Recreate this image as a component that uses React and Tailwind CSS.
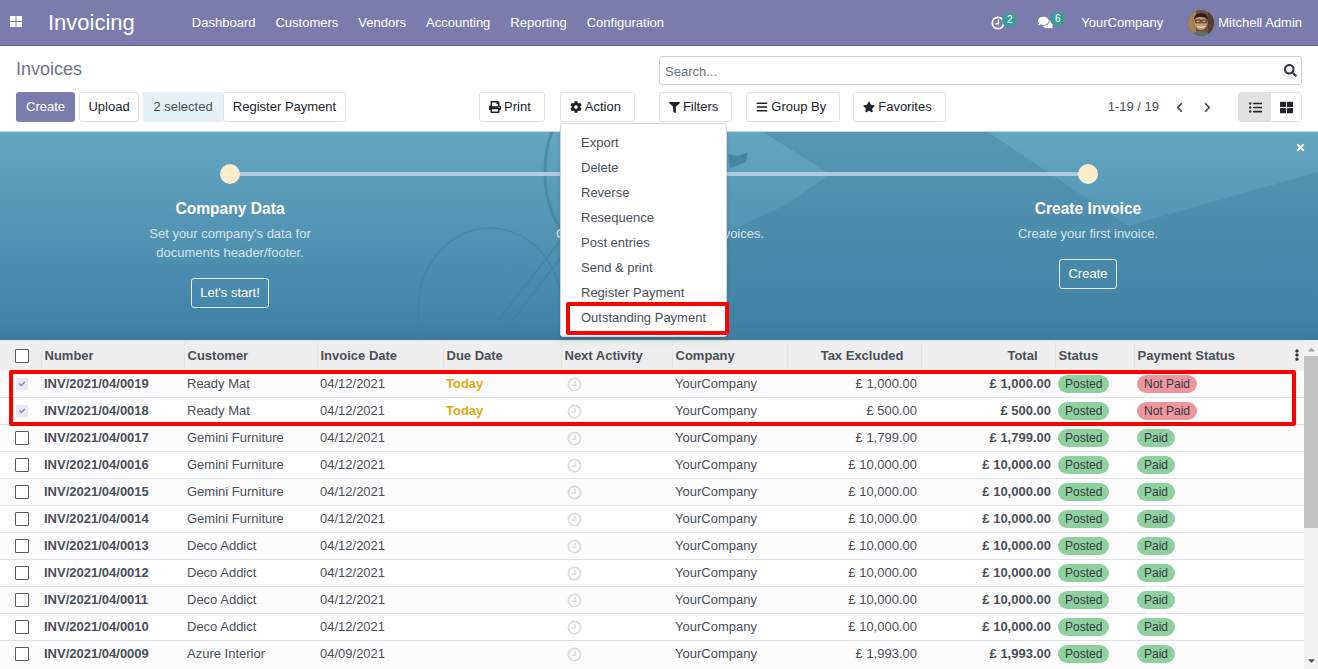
import React from 'react';
import { FaComments, FaPrint, FaCog, FaFilter, FaBars, FaStar, FaListUl, FaThLarge, FaEllipsisV, FaCheck, FaCaretUp, FaCaretDown, FaSearch, FaTimes, FaChevronLeft, FaChevronRight } from 'react-icons/fa';

const navItems = ['Dashboard', 'Customers', 'Vendors', 'Accounting', 'Reporting', 'Configuration'];
const menuItems = ['Export', 'Delete', 'Reverse', 'Resequence', 'Post entries', 'Send & print', 'Register Payment', 'Outstanding Payment'];

const rows = [
  { num: '0019', customer: 'Ready Mat', date: '04/12/2021', due: 'Today', amount: '1,000.00', paid: false, checked: true },
  { num: '0018', customer: 'Ready Mat', date: '04/12/2021', due: 'Today', amount: '500.00', paid: false, checked: true },
  { num: '0017', customer: 'Gemini Furniture', date: '04/12/2021', amount: '1,799.00', paid: true },
  { num: '0016', customer: 'Gemini Furniture', date: '04/12/2021', amount: '10,000.00', paid: true },
  { num: '0015', customer: 'Gemini Furniture', date: '04/12/2021', amount: '10,000.00', paid: true },
  { num: '0014', customer: 'Gemini Furniture', date: '04/12/2021', amount: '10,000.00', paid: true },
  { num: '0013', customer: 'Deco Addict', date: '04/12/2021', amount: '10,000.00', paid: true },
  { num: '0012', customer: 'Deco Addict', date: '04/12/2021', amount: '10,000.00', paid: true },
  { num: '0011', customer: 'Deco Addict', date: '04/12/2021', amount: '10,000.00', paid: true },
  { num: '0010', customer: 'Deco Addict', date: '04/12/2021', amount: '10,000.00', paid: true },
  { num: '0009', customer: 'Azure Interior', date: '04/09/2021', amount: '1,993.00', paid: true },
];

const Btn = ({ children, className = '' }) => (
  <button className={`h-[30px] pl-[9px] pr-[13px] flex items-center gap-[3px] bg-white border border-[#dee2e6] rounded-[3px] text-[13px] text-[#212529] whitespace-nowrap ${className}`}>
    {children}
  </button>
);

const Badge = ({ count, className = '' }) => (
  <span className={`absolute -top-[3px] h-[14px] w-[15px] rounded-full bg-[#3a9d97] text-white text-[10px] leading-[14px] text-center ${className}`}>{count}</span>
);

// open ring with an L shaped hand, same drawing in the navbar and in the rows
const ClockIcon = ({ className = '' }) => (
  <svg viewBox="0 0 16 16" className={className} fill="none" stroke="currentColor">
    <circle cx="8" cy="8" r="6.500" strokeWidth="2" />
    <path d="M8.500 4 V8.800 H5" strokeWidth="1.600" />
  </svg>
);

const Avatar = () => (
  <svg viewBox="0 0 26 26" className="w-[26px] h-[26px] rounded-full">
    <rect width="26" height="26" fill="#6e5239" />
    <rect x="0" y="0" width="8" height="26" fill="#a08455" />
    <rect x="20" y="0" width="6" height="26" fill="#54402f" />
    <ellipse cx="13" cy="12.500" rx="6.500" ry="7.500" fill="#c9987a" />
    <path d="M6 10 Q6 3 13 3 Q20 3 20 10 Q17 6.500 13 7 Q8 6.500 6 10Z" fill="#2b211c" />
    <rect x="7.800" y="10" width="4.400" height="2.800" fill="none" stroke="#221f1e" strokeWidth="0.800" />
    <rect x="13.800" y="10" width="4.400" height="2.800" fill="none" stroke="#221f1e" strokeWidth="0.800" />
    <path d="M9.500 16.500 Q13 18.500 16.500 16.500" fill="none" stroke="#f3ece4" strokeWidth="1" />
    <path d="M3 26 Q5 21 13 21 Q21 21 23 26Z" fill="#5f6f69" />
  </svg>
);

const Navbar = () => (
  <header className="h-[46px] shrink-0 bg-[#7c7bad] border-b border-[#5f5e97] flex items-center text-white">
    <svg viewBox="0 0 12 11" className="w-[12px] h-[11px] ml-[10px] -mt-[2px]" fill="#fff">
      <rect width="5.500" height="5" /><rect x="6.500" width="5.500" height="5" />
      <rect y="6" width="5.500" height="5" /><rect x="6.500" y="6" width="5.500" height="5" />
    </svg>
    <span className="ml-[26px] text-[22px] leading-none">Invoicing</span>
    <nav className="ml-[57px] flex gap-[20px] text-[13px]">
      {navItems.map(item => <span key={item}>{item}</span>)}
    </nav>
    <div className="ml-auto flex items-center text-[13px]">
      <span className="relative mr-[33px]"><ClockIcon className="w-[14px] h-[14px] text-white" /><Badge count="2" className="left-[11px]" /></span>
      <span className="relative mr-[28px]"><FaComments className="w-[15px] h-[15px]" /><Badge count="6" className="left-[12px]" /></span>
      <span>YourCompany</span>
      <span className="ml-[25px] mr-[4px]"><Avatar /></span>
      <span className="mr-[16px]">Mitchell Admin</span>
    </div>
  </header>
);

const ControlPanel = () => (
  <div className="h-[86px] shrink-0 bg-white border-b border-[#ced4da] pl-[16px] pr-[16px]">
    <div className="flex pt-[10px] h-[45px]">
      <h1 className="text-[18px] text-[#6c757d] leading-[26px]">Invoices</h1>
      <div className="ml-auto w-[643px] h-[29px] border border-[#ced4da] rounded-[3px] flex items-center justify-between pl-[5px] pr-[4px] pt-[2px] text-[13px] text-[#6c757d]">
        <span>Search...</span>
        <FaSearch className="w-[13px] h-[13px] text-[#343a40] -mt-[2px]" />
      </div>
    </div>
    <div className="flex items-center mt-[1px]">
      <button className="h-[30px] px-[10px] bg-[#7c7bad] text-white text-[13px] rounded-[3px]">Create</button>
      <Btn className="ml-[4px] !px-0 w-[60px] justify-center">Upload</Btn>
      <span className="ml-[4px] h-[30px] w-[80px] flex items-center justify-center bg-[#e6f1f5] text-[13px] text-[#495057]">2 selected</span>
      <Btn className="!px-0 w-[123px] justify-center">Register Payment</Btn>
      <Btn className="ml-[133px]"><FaPrint className="w-[12px] h-[12px]" /> Print</Btn>
      <Btn className="ml-[15px]"><FaCog className="w-[12px] h-[12px]" /> Action</Btn>
      <Btn className="ml-[24px]"><FaFilter className="w-[11px] h-[11px]" /> Filters</Btn>
      <Btn className="ml-[14px]"><FaBars className="w-[12px] h-[12px]" /> Group By</Btn>
      <Btn className="ml-[13px]"><FaStar className="w-[12px] h-[12px]" /> Favorites</Btn>
      <span className="ml-auto text-[13px] text-[#495057]">1-19 / 19</span>
      <FaChevronLeft className="ml-[15px] w-[11px] h-[11px] text-[#495057]" />
      <FaChevronRight className="ml-[17px] w-[11px] h-[11px] text-[#495057]" />
      <div className="ml-[25px] flex h-[30px] border border-[#dee2e6] rounded-[3px] overflow-hidden">
        <span className="w-[32px] bg-[#e2e2e2] flex items-center justify-center"><FaListUl className="w-[13px] h-[13px] text-[#212529]" /></span>
        <span className="w-[30px] bg-white flex items-center justify-center"><FaThLarge className="w-[13px] h-[13px] text-[#212529]" /></span>
      </div>
    </div>
  </div>
);

const BannerArt = () => (
  <svg viewBox="0 0 1318 208" preserveAspectRatio="none" className="absolute inset-0 w-full h-full">
    <defs>
      <linearGradient id="bannerBg" x1="0" y1="0" x2="0" y2="1">
        <stop offset="0" stopColor="#64a5c0" />
        <stop offset="0.9" stopColor="#4484aa" />
        <stop offset="1" stopColor="#3f7a9d" />
      </linearGradient>
    </defs>
    <rect width="1318" height="208" fill="url(#bannerBg)" />
    <path d="M763 0 L988 0 L1128 94 L1318 40 L1318 208 L640 208 L727 100 L786 73 L830 42Z" fill="#3f7f9f" opacity="0.35" />
    <ellipse cx="490" cy="178" rx="72" ry="82" fill="none" stroke="#3f7f9f" strokeWidth="1.500" opacity="0.55" />
    <ellipse cx="590" cy="40" rx="45" ry="75" fill="none" stroke="#3f7f9f" strokeWidth="3" opacity="0.6" />
    <path d="M561 108 L498 188 M561 125 L510 192" stroke="#3f7f9f" strokeWidth="1.500" opacity="0.55" />
    <path d="M728 22 L738 24 L748 20 L746 30 L736 34 L730 36Z" fill="#3f7f9f" opacity="0.8" />
  </svg>
);

const Step = ({ title, lines, action, className = '' }) => (
  <div className={`absolute top-[32px] flex flex-col items-center text-center ${className}`}>
    <span className="w-[20px] h-[20px] rounded-full bg-[#fbeccb]" />
    <h2 className="mt-[15px] text-[15.6px] leading-[20px] font-bold text-white">{title}</h2>
    <p className="mt-[5px] text-[13px] leading-[19px] text-[#d5e5ec]">{lines.map(l => <span key={l} className="block whitespace-nowrap">{l}</span>)}</p>
    <button className="mt-[16px] h-[30px] px-[8px] border border-[#e4eff4] rounded-[3px] text-[13px] text-white">{action}</button>
  </div>
);

const Banner = () => (
  <section className="h-[208px] shrink-0 relative overflow-hidden">
    <BannerArt />
    <div className="absolute left-[230px] right-[230px] top-[40px] h-[4px] bg-[#abcddb]" />
    <Step className="left-[130px] w-[200px]" title="Company Data" lines={["Set your company's data for", 'documents header/footer.']} action="Let's start!" />
    <Step className="left-[988px] w-[200px]" title="Create Invoice" lines={['Create your first invoice.']} action="Create" />
    <p className="absolute top-[92px] left-[556px] text-[13px] leading-[19px] text-[#d5e5ec] whitespace-nowrap">Customize the look of your invoices.</p>
    <FaTimes className="absolute top-[10px] right-[12px] w-[11px] h-[11px] text-white" />
  </section>
);

const Box = () => <span className="block w-[14px] h-[14px] ml-[15px] border border-[#555b61] bg-white rounded-[1px]" />;

const CheckedBox = () => (
  <span className="ml-[16px] w-[12px] h-[12px] rounded-[2px] bg-[#e7e7f1] flex items-center justify-center">
    <FaCheck className="w-[6px] h-[6px] text-[#7c7bad]" />
  </span>
);

const Pill = ({ color, children }) => (
  <span className={`inline-block h-[18px] leading-[18px] px-[7px] rounded-full text-[12px] text-[#343a40] ${color}`}>{children}</span>
);

const headers = [
  ['Number', 'text-left', 'w-[143px]'],
  ['Customer', 'text-left', 'w-[133px]'],
  ['Invoice Date', 'text-left', 'w-[126px]'],
  ['Due Date', 'text-left', 'w-[118px]'],
  ['Next Activity', 'text-left', 'w-[111px]'],
  ['Company', 'text-left', 'w-[115px]'],
  ['Tax Excluded', 'text-right', 'w-[134px]'],
  ['Total', 'text-right', 'w-[134px]'],
  ['Status', 'text-left', 'w-[79px]'],
  ['Payment Status', 'text-left', 'w-[170px]'],
];

const InvoiceTable = () => (
  <table className="w-[1304px] table-fixed border-collapse text-[13px] text-[#495057]">
    <thead>
      <tr className="h-[29px] bg-[#eeeeee] border-t-[2px] border-b-[2px] border-t-[#e4e7eb] border-b-[#f1f2f4]">
        <th className="w-[41px] border-r border-[#e4e4e4]"><Box /></th>
        {headers.map(([label, align, width]) => (
          <th key={label} className={`${width} ${align} font-bold pl-[3px] pr-[4px] border-r border-[#e4e4e4] last:border-r-0 relative`}>
            {label === 'Tax Excluded' || label === 'Total' ? <span className="pr-[13px]">{label}</span> : label}
            {label === 'Payment Status' && <FaEllipsisV className="absolute right-[1px] top-[7px] w-[12px] h-[12px] text-[#343a40]" />}
          </th>
        ))}
      </tr>
    </thead>
    <tbody>
      {rows.map((row, i) => (
        <tr key={row.num} className={`h-[27px] border-t border-[#dee2e6] ${i % 2 === 0 ? 'bg-[#fcfcfc]' : 'bg-white'}`}>
          <td>{row.checked ? <CheckedBox /> : <Box />}</td>
          <td className="px-[3px] font-bold">INV/2021/04/{row.num}</td>
          <td className="px-[3px]">{row.customer}</td>
          <td className="px-[3px]">{row.date}</td>
          <td className="px-[3px] font-bold text-[#e3a90f]">{row.due}</td>
          <td className="pl-[6px]"><ClockIcon className="w-[15px] h-[15px] mt-[2px] text-[#dcdcdc]" /></td>
          <td className="px-[3px]">YourCompany</td>
          <td className="px-[3px] text-right pr-[4px]">£ {row.amount}</td>
          <td className="px-[3px] text-right pr-[4px] font-bold">£ {row.amount}</td>
          <td className="px-[3px]"><Pill color="bg-[#8fd19e]">Posted</Pill></td>
          <td className="px-[3px]"><Pill color={row.paid ? 'bg-[#8fd19e]' : 'bg-[#ed969e]'}>{row.paid ? 'Paid' : 'Not Paid'}</Pill></td>
        </tr>
      ))}
    </tbody>
  </table>
);

const Scrollbar = () => (
  <div className="w-[14px] shrink-0 bg-[#f1f1f1] flex flex-col items-center">
    <FaCaretUp className="w-[11px] h-[11px] text-[#a3a3a3] mt-[4px]" />
    <div className="w-full h-[172px] mt-[1px] bg-[#c1c1c1]" />
    <FaCaretDown className="w-[11px] h-[11px] text-[#505050] mt-auto mb-[3px]" />
  </div>
);

const ActionMenu = () => (
  <div className="absolute left-[560px] top-[123px] w-[167px] h-[214px] bg-white border border-[#d5d5d5] rounded-[3px] shadow-md pt-[6px] z-10">
    {menuItems.map(item => (
      <div key={item} className="h-[25px] leading-[25px] pl-[20px] text-[13px] text-[#495057]">{item}</div>
    ))}
  </div>
);

const App = () => (
  <div className="relative h-[669px] w-[1318px] overflow-hidden bg-white flex flex-col font-['Liberation_Sans',Arial,sans-serif]">
    <Navbar />
    <ControlPanel />
    <Banner />
    <div className="flex min-h-0 flex-1">
      <div className="flex-1 overflow-hidden"><InvoiceTable /></div>
      <Scrollbar />
    </div>
    <ActionMenu />
    {/* red annotation boxes */}
    <div className="absolute left-[566px] top-[302px] w-[163px] h-[33px] border-[4px] border-[#ff0000] rounded-[2px] z-20" />
    <div className="absolute left-[9px] top-[370px] w-[1287px] h-[56px] border-[4px] border-[#ff0000] rounded-[2px] z-20" />
  </div>
);

export default App;
